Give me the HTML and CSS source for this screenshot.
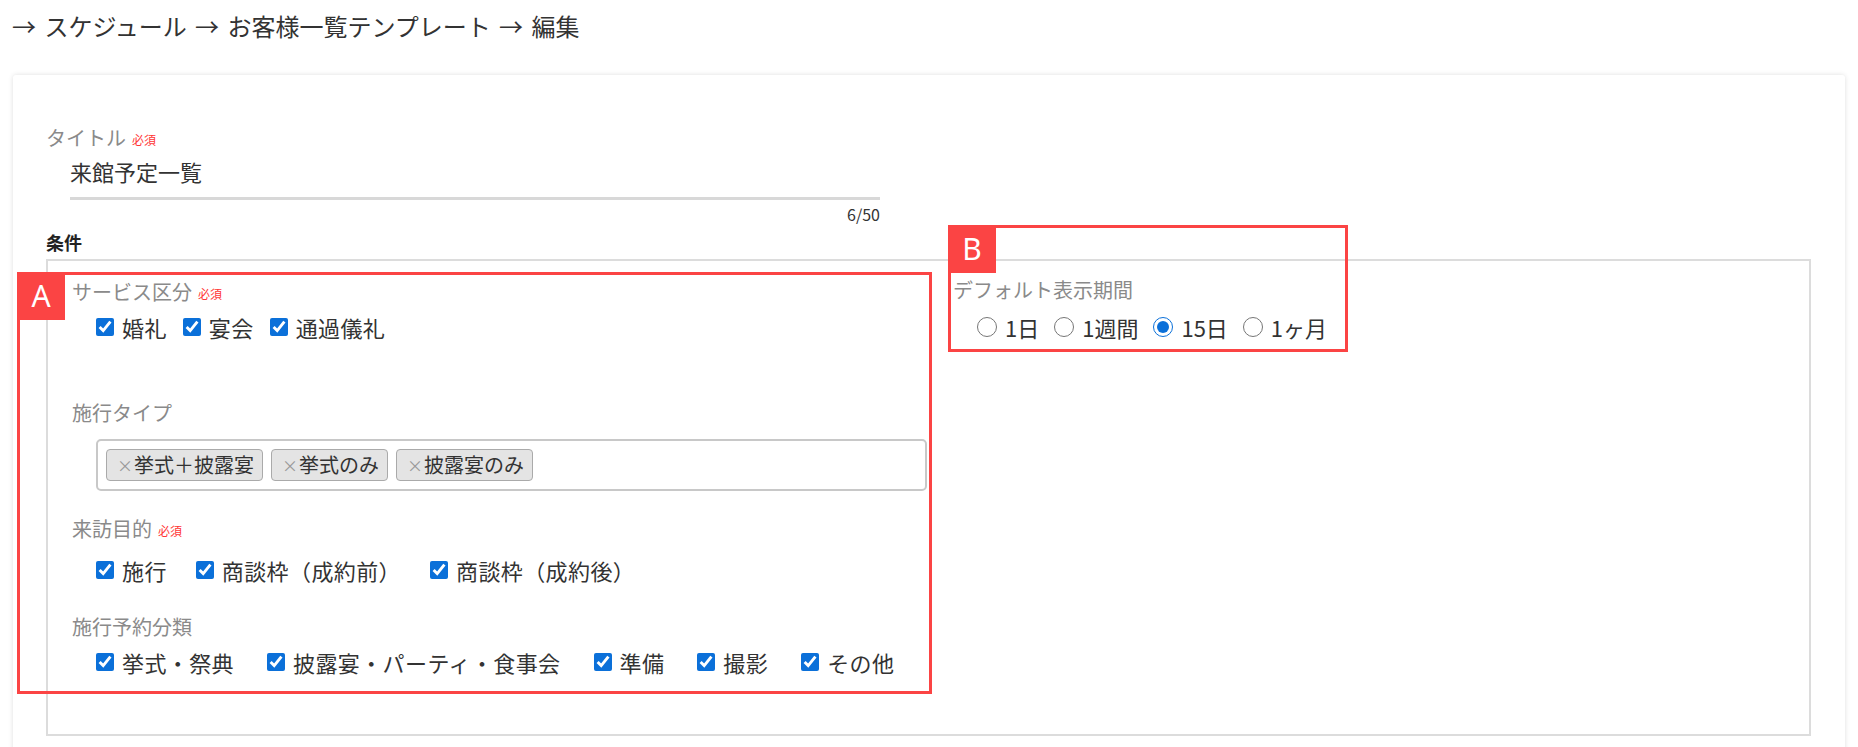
FILE: index.html
```html
<!DOCTYPE html>
<html lang="ja">
<head>
<meta charset="utf-8">
<title>お客様一覧テンプレート 編集</title>
<link rel="stylesheet" href="styles.css">
</head>
<body>
<div class="crumbs">→ スケジュール → お客様一覧テンプレート → 編集</div>
<main class="card">
  <div class="title-field">
    <div class="label">タイトル<span class="req">必須</span></div>
    <div class="title-input">来館予定一覧</div>
    <div class="counter">6/50</div>
  </div>
  <div class="section-head">条件</div>
  <div class="cond">
    <div class="col-left">
      <div class="field f-service">
        <div class="label">サービス区分<span class="req">必須</span></div>
        <div class="checks tight">
          <label class="check"><input type="checkbox" checked><span>婚礼</span></label>
          <label class="check"><input type="checkbox" checked><span>宴会</span></label>
          <label class="check"><input type="checkbox" checked><span>通過儀礼</span></label>
        </div>
      </div>
      <div class="field f-type">
        <div class="label">施行タイプ</div>
        <div class="tags">
          <span class="tag"><span class="x">×</span>挙式＋披露宴</span>
          <span class="tag"><span class="x">×</span>挙式のみ</span>
          <span class="tag"><span class="x">×</span>披露宴のみ</span>
        </div>
      </div>
      <div class="field f-purpose">
        <div class="label">来訪目的<span class="req">必須</span></div>
        <div class="checks wide">
          <label class="check"><input type="checkbox" checked><span>施行</span></label>
          <label class="check"><input type="checkbox" checked><span>商談枠（成約前）</span></label>
          <label class="check"><input type="checkbox" checked><span>商談枠（成約後）</span></label>
        </div>
      </div>
      <div class="field f-class">
        <div class="label">施行予約分類</div>
        <div class="checks wide">
          <label class="check"><input type="checkbox" checked><span>挙式・祭典</span></label>
          <label class="check"><input type="checkbox" checked><span>披露宴・パーティ・食事会</span></label>
          <label class="check"><input type="checkbox" checked><span>準備</span></label>
          <label class="check"><input type="checkbox" checked><span>撮影</span></label>
          <label class="check"><input type="checkbox" checked><span>その他</span></label>
        </div>
      </div>
    </div>
    <div class="col-right">
      <div class="label">デフォルト表示期間</div>
      <div class="radios">
        <label class="radio"><input type="radio" name="period"><span>1日</span></label>
        <label class="radio"><input type="radio" name="period"><span>1週間</span></label>
        <label class="radio"><input type="radio" name="period" checked><span>15日</span></label>
        <label class="radio"><input type="radio" name="period"><span>1ヶ月</span></label>
      </div>
    </div>
  </div>
</main>
<div class="anno anno-a"><span class="anno-tag">A</span></div>
<div class="anno anno-b"><span class="anno-tag">B</span></div>
</body>
</html>
```
FILE: styles.css
```css
body {
  margin: 0;
  position: relative;
  background: #fff;
  color: #333;
  font-family: "Noto Sans CJK JP", "Noto Sans", sans-serif;
}

.crumbs {
  box-sizing: border-box;
  height: 75px;
  padding: 10px 0 0 12px;
  font-size: 24px;
  line-height: 32px;
  word-spacing: 3px;
  color: #333;
}

.card {
  margin: 0 13px;
  padding: 49px 34px 40px 33px;
  background: #fff;
  border-radius: 3px;
  box-shadow: 0 0 5px rgba(0, 0, 0, 0.13);
}

.label {
  display: flex;
  align-items: center;
  height: 28px;
  font-size: 20px;
  line-height: 28px;
  color: #8a8a8a;
}

.req {
  margin-left: 6px;
  margin-top: 3px;
  font-size: 12px;
  line-height: 14px;
  color: #ff3535;
}

.title-field {
  width: 834px;
}

.title-input {
  margin: 4px 0 0 24px;
  padding-bottom: 11px;
  height: 30px;
  font-size: 22px;
  line-height: 30px;
  color: #333;
  border-bottom: 3px solid #d8d8d8;
}

.counter {
  margin-top: 4px;
  height: 20px;
  text-align: right;
  font-size: 16px;
  line-height: 20px;
  color: #333;
}

.section-head {
  margin-top: 6px;
  height: 24px;
  font-size: 18px;
  line-height: 24px;
  font-weight: 700;
  color: #222;
}

.cond {
  margin-top: 5px;
  border: 2px solid #dcdcdc;
  display: grid;
  grid-template-columns: 855px 1fr;
  column-gap: 26px;
  align-items: start;
  padding: 17px 24px 57px 24px;
}

.checks {
  display: flex;
  align-items: center;
  padding-left: 24px;
  height: 30px;
}

.f-service .checks { margin-top: 6px; }
.f-type { margin-top: 57px; }
.f-purpose { margin-top: 24px; }
.f-purpose .checks { margin-top: 12px; }
.f-class { margin-top: 28px; }
.f-class .checks { margin-top: 6px; }

.check {
  display: inline-flex;
  align-items: center;
  flex-shrink: 0;
  white-space: nowrap;
  height: 30px;
  font-size: 22px;
  line-height: 30px;
  letter-spacing: 0.4px;
  color: #333;
}

.checks.tight .check { margin-right: 16px; }
.checks.wide .check { margin-right: 33px; }
.f-purpose .checks.wide .check { margin-right: 29px; }
.checks .check:last-child { margin-right: 0; }

.check input {
  width: 18px;
  height: 18px;
  margin: 0 8px 0 0;
  accent-color: #0b70d9;
}

.tags {
  margin: 12px 0 0 24px;
  border: 2px solid #c8c8c8;
  border-radius: 5px;
  padding: 8px;
  display: flex;
  gap: 8px;
}

.tag {
  box-sizing: border-box;
  height: 32px;
  display: inline-flex;
  align-items: center;
  white-space: nowrap;
  padding: 0 8px 0 10px;
  border: 1px solid #aaa;
  border-radius: 4px;
  background: #e4e4e4;
  font-size: 20px;
  line-height: 30px;
  color: #333;
}

.tag .x {
  width: 13px;
  margin-right: 4px;
  font-size: 16px;
  color: #999;
}

.col-right {
  margin-top: -2px;
}

.radios {
  margin-top: 8px;
  padding-left: 24px;
  display: flex;
  align-items: center;
  height: 30px;
}

.radio {
  display: inline-flex;
  align-items: center;
  white-space: nowrap;
  height: 30px;
  margin-right: 15px;
  font-size: 22px;
  line-height: 30px;
  color: #333;
}

.radio input {
  width: 20px;
  height: 20px;
  margin: 0 8px 0 0;
  accent-color: #0b70d9;
}

.anno {
  position: absolute;
  box-sizing: border-box;
  border: 3px solid #fb4444;
}

.anno-a {
  left: 17px;
  top: 272px;
  width: 915px;
  height: 422px;
}

.anno-b {
  left: 948px;
  top: 225px;
  width: 400px;
  height: 127px;
}

.anno-tag {
  position: absolute;
  top: -3px;
  left: -3px;
  width: 48px;
  height: 48px;
  display: flex;
  align-items: center;
  justify-content: center;
  background: #fb4444;
  color: #fff;
  font-family: "Noto Sans", sans-serif;
  font-size: 30px;
  line-height: 1;
}
```
